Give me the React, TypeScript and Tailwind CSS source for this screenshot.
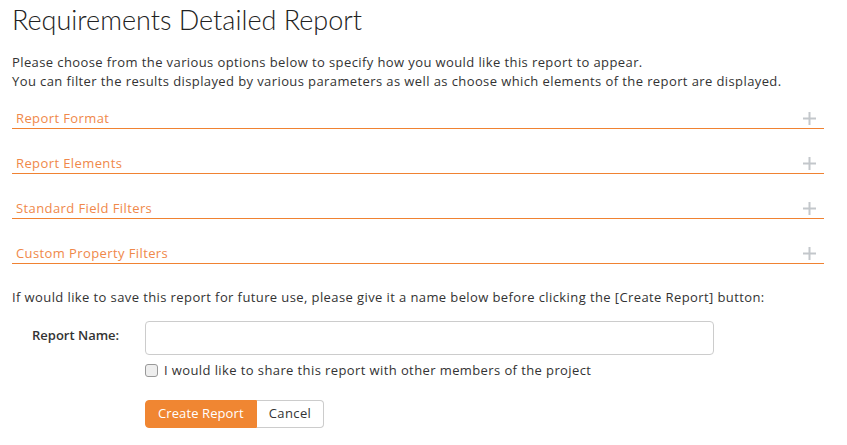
import React from 'react'

const sections = ['Report Format', 'Report Elements', 'Standard Field Filters', 'Custom Property Filters']

function PlusIcon() {
  return (
    <svg width="13" height="13" viewBox="0 0 13 13" className="text-[#c3c7cb]">
      <rect x="5.5" y="0" width="2" height="13" fill="currentColor" />
      <rect x="0" y="5.5" width="13" height="2" fill="currentColor" />
    </svg>
  )
}

export default function App() {
  return (
    <div className="bg-white min-h-[445px] w-[847px] px-3 text-[#333] font-['Open_Sans',sans-serif] tracking-[0.4px]">
      <h1 className="pt-[1px] text-[27px] leading-[38px] font-light tracking-normal text-[#222] font-['Lato',sans-serif]">
        Requirements Detailed Report
      </h1>
      <p className="mt-[14px] text-[13px] leading-[19px] w-[812px]">
        Please choose from the various options below to specify how you would like this report to appear.
        <br />
        You can filter the results displayed by various parameters as well as choose which elements of the report are displayed.
      </p>

      <div className="mt-[9px] w-[812px]">
        {sections.map((s) => (
          <div key={s} className="mt-4 first:mt-0 flex items-center justify-between border-b border-[#f08232] pt-[9px] pb-[1px]">
            <span className="pl-1 text-[13px] leading-[18px] text-[#f0884a]">{s}</span>
            <span className="pr-2">
              <PlusIcon />
            </span>
          </div>
        ))}
      </div>

      <p className="mt-[24px] text-[13px] leading-[19px]">
        If would like to save this report for future use, please give it a name below before clicking the [Create Report] button:
      </p>

      <div className="mt-[14px] flex items-center">
        <label className="w-[133px] pl-5 -mt-[4px] text-[13px] font-semibold tracking-normal text-[#333]">Report Name:</label>
        <input type="text" className="h-[34px] w-[569px] rounded border border-[#ccc] px-2 text-[13px]" />
      </div>

      <div className="mt-[6px] ml-[133px] flex items-center gap-[6px]">
        <span className="w-[13px] h-[13px] rounded-[3px] border border-[#999] bg-[#eee]" />
        <span className="text-[13px] leading-[19px] text-[#333]">I would like to share this report with other members of the project</span>
      </div>

      <div className="mt-[20px] ml-[133px] flex">
        <button className="h-[28px] px-3 rounded-l bg-[#f08632] text-white text-[13px] tracking-[0.1px] border border-[#f08632]">Create Report</button>
        <button className="h-[28px] px-3 rounded-r bg-white text-[#333] text-[13px] border border-[#ccc] border-l-0">Cancel</button>
      </div>
    </div>
  )
}
